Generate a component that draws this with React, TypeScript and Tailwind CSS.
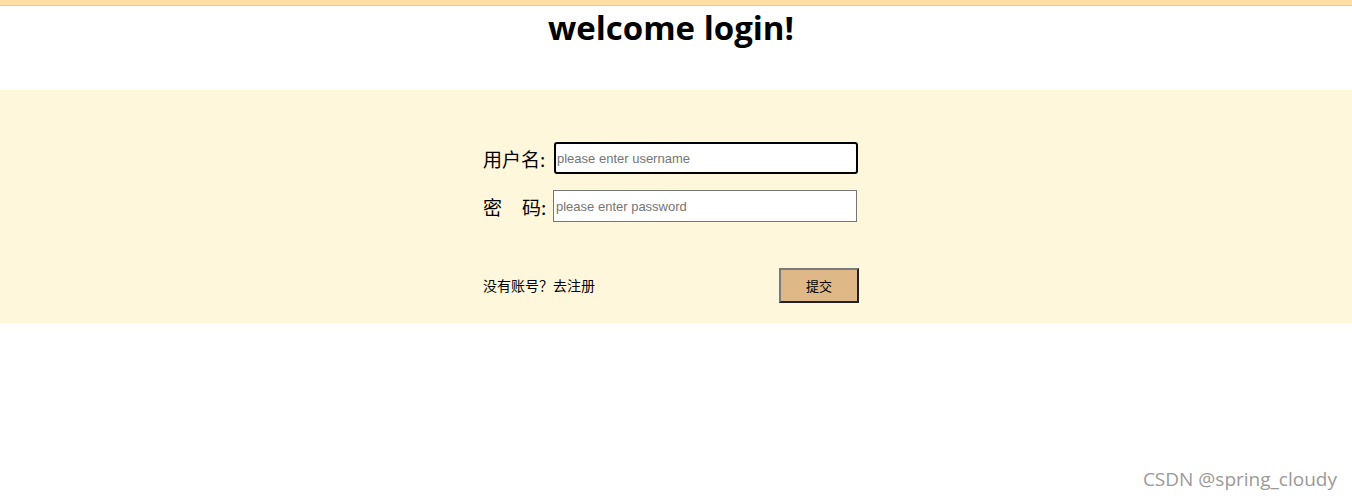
import React from "react";

export default function App() {
  return (
    <div className="relative w-[1352px] h-[500px] bg-white overflow-hidden font-['Liberation_Sans','Noto_Sans_CJK_SC',sans-serif]">
      <div className="h-[6px] bg-[#ffdfa2] border-b border-[#e9c98f]" />
      <h1 className="text-center font-bold text-[33px] leading-[44px] text-black -translate-x-[5px] font-['Open_Sans','Noto_Sans',sans-serif]">
        welcome login!
      </h1>
      <div className="mt-[40px] h-[233px] bg-[#fff7db] flex justify-center">
        <div className="w-[376px] -translate-x-[5px] flex flex-col font-['Noto_Sans_CJK_SC',sans-serif]">
          <div className="flex items-center mt-[52px] h-[32px]">
            <span className="text-[19px] w-[71px] text-black leading-none">用户名:</span>
            <input
              className="w-[304px] h-[32px] bg-white border-2 border-black rounded-[3px] px-[1px] text-[13px] outline-none placeholder:text-[#757575] font-['Liberation_Sans',Arial,sans-serif]"
              placeholder="please enter username"
            />
          </div>
          <div className="flex items-center mt-[16px] h-[32px]">
            <span className="text-[19px] w-[71px] text-black leading-none flex">
              <span>密</span>
              <span className="ml-[20px]">码:</span>
            </span>
            <input
              className="w-[304px] h-[32px] bg-white border border-[#767676] px-[2px] text-[13px] outline-none placeholder:text-[#757575] -ml-[1px] font-['Liberation_Sans',Arial,sans-serif]"
              placeholder="please enter password"
            />
          </div>
          <div className="flex items-center justify-between mt-[46px] h-[35px]">
            <span className="text-[14px] text-black">没有账号？去注册</span>
            <button className="w-[80px] h-[35px] bg-[#deb887] border-2 border-t-[#7b7b7b] border-l-[#7b7b7b] border-r-[#222222] border-b-[#222222] text-[13px] text-black">
              提交
            </button>
          </div>
        </div>
      </div>
      <div className="absolute right-[15px] bottom-[7px] text-[19px] text-[#9a9a9a] font-['Open_Sans',sans-serif]">
        CSDN @spring_cloudy
      </div>
    </div>
  );
}
